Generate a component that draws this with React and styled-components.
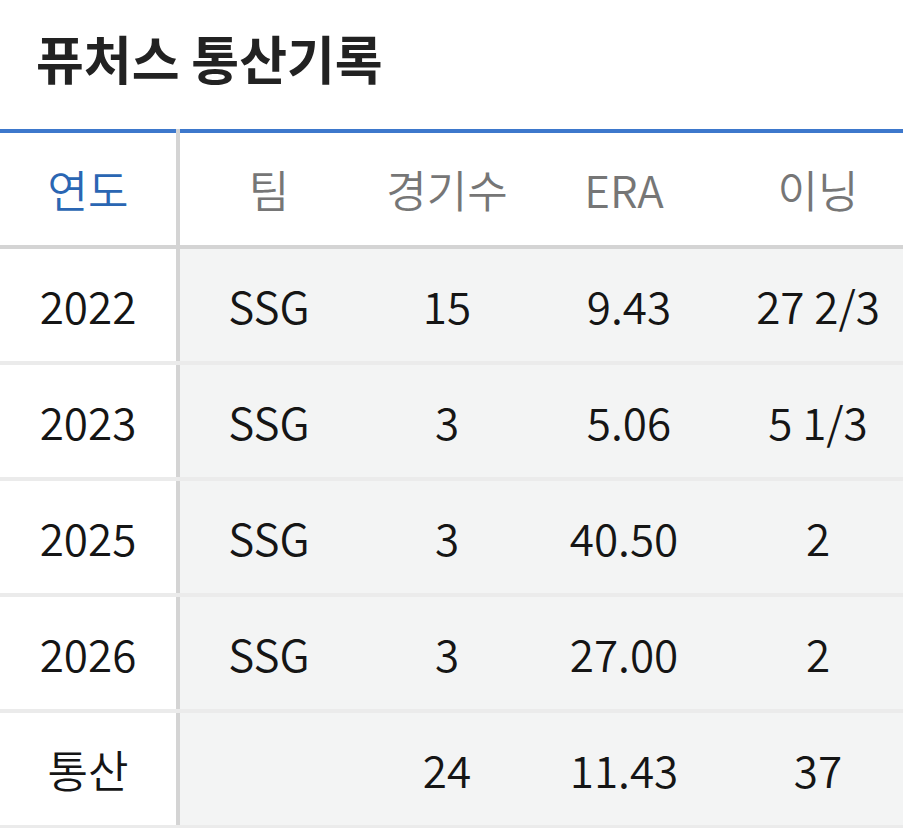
import React from "react";
import styled, { createGlobalStyle } from "styled-components";

const Global = createGlobalStyle`
  html, body { margin: 0; padding: 0; background: #fff; }
  body { font-family: "Noto Sans CJK KR", "Noto Sans", sans-serif; }
`;

const Page = styled.div`
  width: 903px;
  overflow: hidden;
`;

const TitleBar = styled.div`
  height: 129px;
  display: flex;
  align-items: center;
  padding-left: 36px;
  padding-bottom: 14px;
  box-sizing: border-box;
`;

const Title = styled.h2`
  margin: 0;
  font-size: 52px;
  font-weight: 700;
  color: #222;
  letter-spacing: 0;
`;

const Table = styled.table`
  border-collapse: collapse;
  table-layout: fixed;
  width: 903px;
  border-top: 4px solid #3d78cc;
`;

const Cell = styled.td`
  height: 112px;
  padding: 0;
  padding-left: ${(p) => (p.$last ? "21px" : "0")};
  text-align: center;
  font-size: 44px;
  font-weight: 350;
  color: ${(p) => (p.$head ? (p.$first ? "#2a66b3" : "#767676") : "#151515")};
  background: ${(p) => (p.$head || p.$first ? "#fff" : "#f3f4f4")};
  border-right: ${(p) => (p.$first ? "4px solid #d4d4d4" : "none")};
  border-bottom: 4px solid ${(p) => (p.$head ? "#d4d4d4" : "#ebebeb")};
  white-space: nowrap;
  box-sizing: content-box;
`;

const widths = [178, 180, 178, 176, 191];

const head = ["연도", "팀", "경기수", "ERA", "이닝"];
const rows = [
  ["2022", "SSG", "15", "\u00a09.43", "27 2/3"],
  ["2023", "SSG", "3", "\u00a05.06", "5 1/3"],
  ["2025", "SSG", "3", "40.50", "2"],
  ["2026", "SSG", "3", "27.00", "2"],
  ["통산", "", "24", "11.43", "37"],
];

export default function App() {
  return (
    <Page>
      <Global />
      <TitleBar>
        <Title>퓨처스 통산기록</Title>
      </TitleBar>
      <Table>
        <colgroup>
          {widths.map((w, i) => (
            <col key={i} style={{ width: w }} />
          ))}
        </colgroup>
        <thead>
          <tr>
            {head.map((h, i) => (
              <Cell as="th" key={i} $head $first={i === 0} $last={i === 4}>
                {h}
              </Cell>
            ))}
          </tr>
        </thead>
        <tbody>
          {rows.map((r, ri) => (
            <tr key={ri}>
              {r.map((c, i) => (
                <Cell key={i} $first={i === 0} $last={i === 4}>
                  {c}
                </Cell>
              ))}
            </tr>
          ))}
        </tbody>
      </Table>
    </Page>
  );
}
